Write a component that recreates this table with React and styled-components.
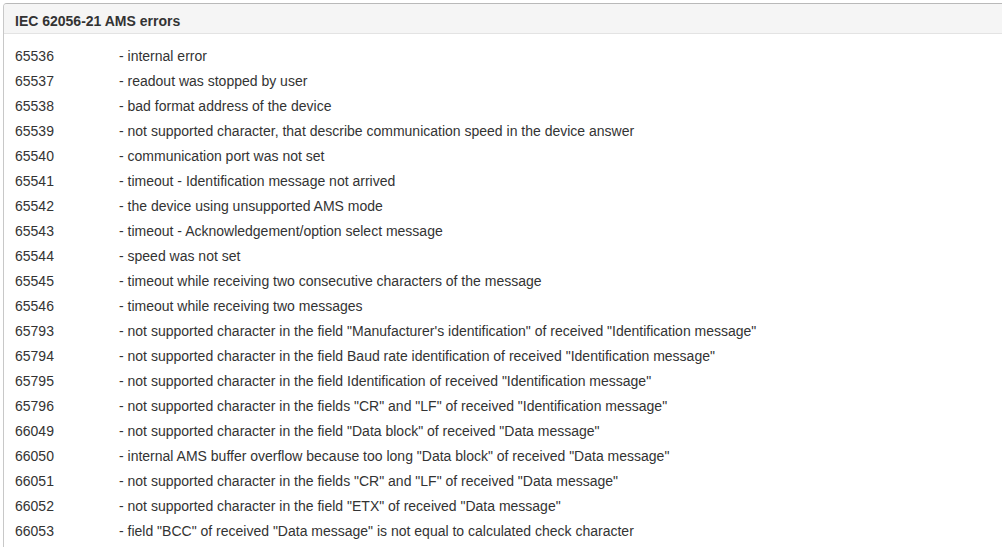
import React from "react";
import styled, { createGlobalStyle } from "styled-components";

const Global = createGlobalStyle`
  html, body { margin: 0; padding: 0; background: #fff; }
  body { font-family: "Liberation Sans", Arial, sans-serif; color: #333; }
`;

const Page = styled.div`
  padding: 3px 0 0 3px;
  overflow: hidden;
  height: 547px;
  box-sizing: border-box;
`;

const Panel = styled.section`
  width: 1000px;
  border: 1px solid #c8c8c8;
  border-top-color: #b9b9b9;
  border-radius: 4px;
  background: #fff;
`;

const Heading = styled.header`
  background: #f5f5f5;
  border-bottom: 1px solid #e3e3e3;
  padding: 9px 11px 4px;
  height: 16px;
  border-radius: 3px 3px 0 0;
`;

const Title = styled.h3`
  margin: 0;
  font-size: 14px;
  line-height: 16px;
  font-weight: bold;
  color: #333;
`;

const Body = styled.div`
  padding: 9px 11px 15px;
`;

const Row = styled.div`
  display: grid;
  grid-template-columns: 104px 1fr;
  height: 25px;
  align-items: center;
  font-size: 14px;
  line-height: 20px;
  color: #333;
`;

const Code = styled.span``;
const Desc = styled.span`white-space: nowrap;`;

const rows = [
  ["65536", "- internal error"],
  ["65537", "- readout was stopped by user"],
  ["65538", "- bad format address of the device"],
  ["65539", "- not supported character, that describe communication speed in the device answer"],
  ["65540", "- communication port was not set"],
  ["65541", "- timeout - Identification message not arrived"],
  ["65542", "- the device using unsupported AMS mode"],
  ["65543", "- timeout - Acknowledgement/option select message"],
  ["65544", "- speed was not set"],
  ["65545", "- timeout while receiving two consecutive characters of the message"],
  ["65546", "- timeout while receiving two messages"],
  ["65793", "- not supported character in the field \"Manufacturer's identification\" of received \"Identification message\""],
  ["65794", "- not supported character in the field Baud rate identification of received \"Identification message\""],
  ["65795", "- not supported character in the field Identification of received \"Identification message\""],
  ["65796", "- not supported character in the fields \"CR\" and \"LF\" of received \"Identification message\""],
  ["66049", "- not supported character in the field \"Data block\" of received \"Data message\""],
  ["66050", "- internal AMS buffer overflow because too long \"Data block\" of received \"Data message\""],
  ["66051", "- not supported character in the fields \"CR\" and \"LF\" of received \"Data message\""],
  ["66052", "- not supported character in the field \"ETX\" of received \"Data message\""],
  ["66053", "- field \"BCC\" of received \"Data message\" is not equal to calculated check character"],
];

export default function App() {
  return (
    <>
      <Global />
      <Page>
        <Panel>
          <Heading>
            <Title>IEC 62056-21 AMS errors</Title>
          </Heading>
          <Body>
            {rows.map(([c, d]) => (
              <Row key={c}>
                <Code>{c}</Code>
                <Desc>{d}</Desc>
              </Row>
            ))}
          </Body>
        </Panel>
      </Page>
    </>
  );
}
